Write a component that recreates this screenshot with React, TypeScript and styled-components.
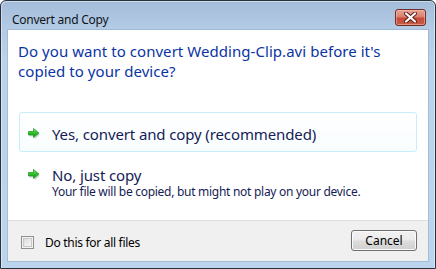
import React, { FC } from 'react'
import styled, { createGlobalStyle } from 'styled-components'

const GlobalStyle = createGlobalStyle`
	html, body {
		margin: 0;
		padding: 0;
		background: #ffffff;
	}
	body {
		font-family: 'Noto Sans', 'Open Sans', sans-serif;
	}
`

const GreenArrow: FC = () => (
	<svg width="14" height="12" viewBox="0 0 14 12">
		<defs>
			<linearGradient id="arrowFill" x1="0" y1="0" x2="0" y2="1">
				<stop offset="0" stopColor="#8ae886" />
				<stop offset="0.45" stopColor="#33c42e" />
				<stop offset="1" stopColor="#0f9410" />
			</linearGradient>
		</defs>
		<path d="M1.5 5 h5 V1.5 l5.5 5 -5.5 5 V8.5 h-5 z" fill="#000" opacity="0.16" />
		<path d="M0.5 3.5 h5 V0.5 l5.5 4.5 -5.5 4.5 V7 h-5 z" fill="url(#arrowFill)" stroke="#179417" strokeWidth="0.7" strokeLinejoin="round" />
	</svg>
)

const CloseGlyph: FC = () => (
	<svg width="13" height="11" viewBox="0 0 13 11">
		<path d="M2 1.5 L11 9.5 M11 1.5 L2 9.5" stroke="#5a1c16" strokeWidth="4" strokeLinecap="round" />
		<path d="M2 1.5 L11 9.5 M11 1.5 L2 9.5" stroke="#ffffff" strokeWidth="2.2" strokeLinecap="round" />
	</svg>
)

interface Option {
	title: string
	note?: string
	active?: boolean
}

const options: Option[] = [
	{ title: 'Yes, convert and copy (recommended)', active: true },
	{ title: 'No, just copy', note: 'Your file will be copied, but might not play on your device.' },
]

const App: FC = () => (
	<>
		<GlobalStyle />
		<StyledWindow>
			<StyledTitleBar>
				<StyledTitle>Convert and Copy</StyledTitle>
				<StyledClose aria-label="Close">
					<CloseGlyph />
				</StyledClose>
			</StyledTitleBar>
			<StyledClient>
				<StyledBody>
					<StyledHeading>
						Do you want to convert Wedding-Clip.avi before it's copied to your device?
					</StyledHeading>
					<StyledOptions>
						{options.map((option, i) => (
							<StyledOption key={i} active={!!option.active}>
								<StyledArrow>
									<GreenArrow />
								</StyledArrow>
								<div>
									<StyledOptionTitle>{option.title}</StyledOptionTitle>
									{option.note && <StyledOptionNote>{option.note}</StyledOptionNote>}
								</div>
							</StyledOption>
						))}
					</StyledOptions>
				</StyledBody>
				<StyledFooter>
					<StyledCheckLabel>
						<StyledCheckbox />
						Do this for all files
					</StyledCheckLabel>
					<StyledButton>Cancel</StyledButton>
				</StyledFooter>
			</StyledClient>
		</StyledWindow>
	</>
)

export default App

const StyledWindow = styled.div`
	box-sizing: border-box;
	width: 436px;
	height: 269px;
	display: flex;
	flex-direction: column;
	padding: 0 7px 7px 7px;
	border: 1px solid #27323e;
	border-radius: 6px 6px 0 0;
	background: linear-gradient(to bottom, #a3bcd9 0px, #b4cbe6 28px, #bcd3ec 60px, #bcd4ec 100%);
	box-shadow: inset 1px 1px 0 rgba(255, 255, 255, 0.45), inset -1px 0 0 rgba(255, 255, 255, 0.45);
`

const StyledTitleBar = styled.div`
	height: 29px;
	display: flex;
	align-items: flex-start;
	justify-content: space-between;
	padding: 0 2px 0 4px;
`

const StyledTitle = styled.div`
	margin-top: 11px;
	font-size: 12px;
	line-height: 15px;
	letter-spacing: -0.25px;
	color: #101418;
`

const StyledClose = styled.div`
	box-sizing: border-box;
	margin-top: 8px;
	width: 31px;
	height: 17px;
	display: flex;
	align-items: center;
	justify-content: center;
	border: 1px solid #6e2d27;
	border-radius: 3px;
	background: linear-gradient(to bottom, #e8a394 0%, #d8806f 45%, #c54a37 55%, #c95d44 100%);
	box-shadow: inset 0 0 0 1px rgba(255, 200, 190, 0.5);
`

const StyledClient = styled.div`
	flex: 1;
	display: flex;
	flex-direction: column;
	background: #ffffff;
	box-shadow: 0 0 0 1px rgba(120, 150, 185, 0.35);
`

const StyledBody = styled.div`
	flex: 1;
	padding: 11px 11px 0 10px;
`

const StyledHeading = styled.div`
	width: 370px;
	font-size: 15px;
	line-height: 20px;
	letter-spacing: 0.05px;
	color: #0a34a4;
`

const StyledOptions = styled.div`
	margin-top: 31px;
	margin-left: 1px;
	display: flex;
	flex-direction: column;
	gap: 1px;
`

interface OptionProps {
	active: boolean
}
const StyledOption = styled.div<OptionProps>`
	box-sizing: border-box;
	min-height: 40px;
	display: flex;
	align-items: flex-start;
	padding: 12px 8px 7px 8px;
	border: 1px solid ${({ active }) => (active ? '#c8eefc' : 'transparent')};
	border-radius: 3px;
	background: ${({ active }) => (active ? 'linear-gradient(to bottom, #ffffff, #f8fdff)' : 'transparent')};
`

const StyledArrow = styled.div`
	width: 24px;
	padding-top: 3px;
	line-height: 0;
`

const StyledOptionTitle = styled.div`
	font-size: 15px;
	line-height: 19px;
	letter-spacing: -0.12px;
	color: #151c55;
`

const StyledOptionNote = styled.div`
	font-size: 12px;
	line-height: 13px;
	letter-spacing: -0.28px;
	color: #151c55;
`

const StyledFooter = styled.div`
	height: 40px;
	display: flex;
	align-items: center;
	justify-content: space-between;
	padding: 0 11px 0 13px;
	border-top: 1px solid #dfdfdf;
	background: #f0f0f0;
`

const StyledCheckLabel = styled.label`
	display: flex;
	align-items: center;
	gap: 11px;
	margin-top: 2px;
	font-size: 12px;
	letter-spacing: -0.3px;
	color: #000000;
`

const StyledCheckbox = styled.span`
	box-sizing: border-box;
	width: 13px;
	height: 13px;
	border: 1px solid #8f8f8f;
	background: linear-gradient(135deg, #d6d6d6 0%, #eeeeee 60%, #fafafa 100%);
	box-shadow: inset 0 0 0 1px #f4f4f4, inset 0 0 0 2px #c8c8c8;
`

const StyledButton = styled.div`
	box-sizing: border-box;
	width: 66px;
	height: 21px;
	display: flex;
	align-items: center;
	justify-content: center;
	margin-top: -1px;
	border: 1px solid #707070;
	border-radius: 3px;
	background: linear-gradient(to bottom, #f2f2f2 0%, #ebebeb 48%, #dddddd 52%, #cfcfcf 100%);
	box-shadow: inset 0 0 0 1px #fbfbfb;
	font-size: 12px;
	color: #000000;
`
